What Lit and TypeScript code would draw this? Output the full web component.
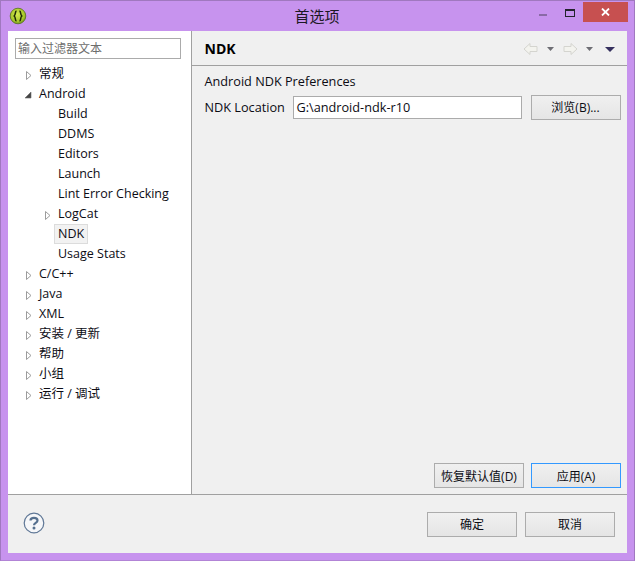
import { LitElement, html, css, svg } from "lit";
import { customElement } from "lit/decorators.js";

type Row = { label: string; level: number; arrow?: "open" | "closed"; selected?: boolean };

const ROWS: Row[] = [
  { label: "常规", level: 0, arrow: "closed" },
  { label: "Android", level: 0, arrow: "open" },
  { label: "Build", level: 1 },
  { label: "DDMS", level: 1 },
  { label: "Editors", level: 1 },
  { label: "Launch", level: 1 },
  { label: "Lint Error Checking", level: 1 },
  { label: "LogCat", level: 1, arrow: "closed" },
  { label: "NDK", level: 1, selected: true },
  { label: "Usage Stats", level: 1 },
  { label: "C/C++", level: 0, arrow: "closed" },
  { label: "Java", level: 0, arrow: "closed" },
  { label: "XML", level: 0, arrow: "closed" },
  { label: "安装 / 更新", level: 0, arrow: "closed" },
  { label: "帮助", level: 0, arrow: "closed" },
  { label: "小组", level: 0, arrow: "closed" },
  { label: "运行 / 调试", level: 0, arrow: "closed" },
];

const closedArrow = svg`<path d="M2.500 2.500 L7 6.500 L2.500 10.500 Z" fill="#fff" stroke="#9c9c9c" stroke-width="1"/>`;
const openArrow = svg`<path d="M7 3 L7 9 L1 9 Z" fill="#454545" stroke="#6a6a6a" stroke-width=".6"/>`;

@customElement("app-root")
export class AppRoot extends LitElement {
  static styles = css`
    :host {
      display: block;
      width: 635px;
      height: 561px;
      font-family: "Open Sans", "Noto Sans CJK SC", sans-serif;
      font-size: 12px;
      color: #0c0c14;
    }
    * { box-sizing: border-box; }
    .window {
      width: 635px;
      height: 561px;
      background: #c793ee;
      border: 1px solid #a078bf;
      border-bottom: 1px solid #b284d6;
      padding: 0 7px 7px 7px;
      display: flex;
      flex-direction: column;
    }
    .titlebar {
      height: 29.5px;
      flex: none;
      display: grid;
      grid-template-columns: 1fr auto 1fr;
      align-items: center;
      margin-left: -1px;
    }
    .logo { display: block; margin: 1px 0 0 2px; }
    .title {
      font-family: "Noto Sans CJK SC", sans-serif;
      font-size: 15px;
      color: #1c1824;
      padding-bottom: 1px;
    }
    .winbtns { display: flex; justify-content: flex-end; align-items: flex-start; height: 100%; }
    .winbtn { display: flex; align-items: center; justify-content: center; }
    .min { width: 26px; height: 21px; margin-right: 1px; margin-top: 1px; }
    .max { width: 26px; height: 21px; margin-top: 1px; }
    .close { width: 45px; height: 20px; background: #c75050; margin-top: 1px; margin-right: -1px; }
    .client {
      flex: 1;
      min-height: 0;
      background: #f0f0f0;
      display: flex;
      flex-direction: column;
    }
    .main { flex: 1; min-height: 0; display: flex; border-bottom: 1px solid #a0a0a0; }
    .side {
      width: 183.5px;
      flex: none;
      background: #fff;
      border-right: 1px solid #a0a0a0;
      padding: 7px 10px 0 8px;
    }
    .filter {
      width: 166px;
      height: 21px;
      margin-left: -1px;
      border: 1px solid #ababab;
      background: #fff;
      padding: 0 0 0 2px;
      font-size: 12px;
      line-height: 20px;
      color: #6d6d6d;
      white-space: nowrap;
    }
    .tree { margin-top: 5px; }
    .row { height: 20px; display: flex; align-items: center; white-space: nowrap; position: relative; font-size: 12.5px; }
    .row.l0 { padding-left: 23px; }
    .row.l1 { padding-left: 42px; }
    .row svg { position: absolute; top: 5px; }
    .row.l0 svg { left: 8px; }
    .row.l1 svg { left: 27px; }
    .label { padding: 0 3px 1px; height: 20px; line-height: 18px; border: 1px solid transparent; margin-left: -4px; }
    .label.sel { background: #f2f2f2; border-color: #dcdcdc; }
    .pane { flex: 1; min-width: 0; display: flex; flex-direction: column; }
    .head {
      height: 35px;
      flex: none;
      display: flex;
      align-items: center;
      justify-content: space-between;
      border-bottom: 1px solid #a0a0a0;
      padding: 2px 4px 0 13px;
    }
    .head h2 { margin: 0; font-size: 14px; font-weight: 700; color: #000; line-height: 1; }
    .nav { display: flex; align-items: center; }
    .body { flex: 1; min-height: 0; display: flex; flex-direction: column; padding: 7px 6px 6px 13px; }
    .sub { font-size: 12.7px; line-height: 16px; }
    .loc { display: flex; align-items: center; margin-top: 6px; }
    .loc .lbl { width: 88px; flex: none; font-size: 12.7px; padding-bottom: 1px; }
    .input {
      width: 229px;
      height: 23px;
      border: 1px solid #ababab;
      background: #fff;
      padding-left: 3px;
      line-height: 20px;
      font-size: 12.7px;
    }
    .btn {
      height: 25px;
      width: 90px;
      border: 1px solid #acacac;
      background: linear-gradient(#f0f0f0, #e5e5e5);
      display: flex;
      align-items: center;
      justify-content: center;
      font-size: 12px;
      white-space: nowrap;
      flex: none;
    }
    .btn.focus { border-color: #3399ff; }
    .browse { margin-left: 9px; }
    .spacer { flex: 1; }
    .actions { display: flex; justify-content: flex-end; gap: 7px; }
    .footer {
      height: 58px;
      flex: none;
      display: flex;
      align-items: center;
      justify-content: space-between;
      padding: 0 12px 0 15px;
    }
    .dlg { display: flex; gap: 8px; }
    .help { display: block; margin-top: -2px; }
  `;

  private row(r: Row) {
    return html`<div class="row l${r.level}">
      ${r.arrow
        ? html`<svg width="10" height="13" viewBox="0 0 10 13">${r.arrow === "open" ? openArrow : closedArrow}</svg>`
        : ""}
      <span class="label ${r.selected ? "sel" : ""}">${r.label}</span>
    </div>`;
  }

  render() {
    return html`<div class="window">
      <div class="titlebar">
        <svg class="logo" width="18" height="18" viewBox="0 0 18 18">
          <defs>
            <radialGradient id="g" cx=".45" cy=".4" r=".65">
              <stop offset="0" stop-color="#d6ea4e" />
              <stop offset=".7" stop-color="#a6c62a" />
              <stop offset="1" stop-color="#66881a" />
            </radialGradient>
          </defs>
          <circle cx="9" cy="9" r="7.800" fill="url(#g)" stroke="#56701a" stroke-width=".8" />
          <path d="M7.500 4 C5.800 4.300 6.900 7.800 5.200 9 C6.900 10.200 5.800 13.700 7.500 14 M10.500 4 C12.200 4.300 11.100 7.800 12.800 9 C11.100 10.200 12.200 13.700 10.500 14" fill="none" stroke="#1d2a06" stroke-width="1.500" />
        </svg>
        <div class="title">首选项</div>
        <div class="winbtns">
          <div class="winbtn min">
            <svg width="9" height="3" viewBox="0 0 9 3" style="margin-top:6px"><rect width="8" height="2" fill="#8a6aa6"/></svg>
          </div>
          <div class="winbtn max">
            <svg width="10" height="8" viewBox="0 0 10 8"><rect x=".5" y=".5" width="9" height="7" fill="none" stroke="#23222c"/><rect x="0" y="0" width="10" height="2" fill="#23222c"/></svg>
          </div>
          <div class="winbtn close">
            <svg width="9" height="8" viewBox="0 0 9 8"><path d="M1 .5 L8 7.500 M8 .5 L1 7.500" stroke="#fff" stroke-width="1.800"/></svg>
          </div>
        </div>
      </div>
      <div class="client">
        <div class="main">
          <div class="side">
            <div class="filter">输入过滤器文本</div>
            <div class="tree">${ROWS.map((r) => this.row(r))}</div>
          </div>
          <div class="pane">
            <div class="head">
              <h2>NDK</h2>
              <svg class="nav" width="100" height="14" viewBox="0 0 100 14">
                <path d="M1 7 L7 1.500 V4.500 H14 V9.500 H7 V12.500 Z" fill="#f3f3ee" stroke="#d4d4cf"/>
                <path d="M24 5 H31 L27.500 9 Z" fill="#6e6e74"/>
                <path d="M54 7 L48 1.500 V4.500 H41 V9.500 H48 V12.500 Z" fill="#f3f3ee" stroke="#d4d4cf"/>
                <path d="M63 5 H70 L66.500 9 Z" fill="#6e6e74"/>
                <path d="M82 5 H92 L87 10 Z" fill="#35305e"/>
              </svg>
            </div>
            <div class="body">
              <div class="sub">Android NDK Preferences</div>
              <div class="loc">
                <div class="lbl">NDK Location</div>
                <div class="input">G:\\android-ndk-r10</div>
                <div class="btn browse">浏览(B)...</div>
              </div>
              <div class="spacer"></div>
              <div class="actions">
                <div class="btn">恢复默认值(D)</div>
                <div class="btn focus">应用(A)</div>
              </div>
            </div>
          </div>
        </div>
        <div class="footer">
          <svg class="help" width="22" height="22" viewBox="0 0 22 22">
            <circle cx="11" cy="11" r="9.800" fill="#f6f7f9" stroke="#5f7796" stroke-width="1.200"/>
            <path d="M7.500 8.500 C7.500 5 14.500 5 14.500 8.500 C14.500 11 11 10.800 11 13.300" fill="none" stroke="#56708f" stroke-width="2.200"/>
            <circle cx="11" cy="16" r="1.500" fill="#56708f"/>
          </svg>
          <div class="dlg">
            <div class="btn">确定</div>
            <div class="btn">取消</div>
          </div>
        </div>
      </div>
    </div>`;
  }
}
